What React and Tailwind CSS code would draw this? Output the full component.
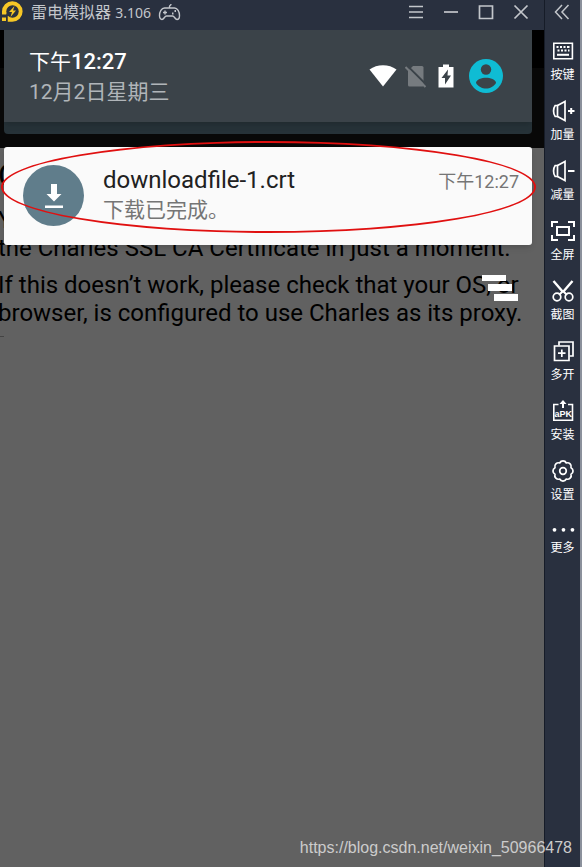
const KeyboardIcon = () => (
  <svg viewBox="0 0 24 24" className="h-6 w-6" fill="none" stroke="currentColor" strokeWidth="1.6">
    <path d="M2.8 4.3h18.6v15.4H2.8z" />
    <path d="M5.500 8h2M9 8h2M12.500 8h2M16 8h2.500M6.500 11.500h2M10 11.500h2M13.500 11.500h2M17 11.500h1.500" strokeWidth="2" />
    <path d="M6 15.800h12" strokeWidth="2" />
  </svg>
);

const VolumeIcon = ({ up }) => (
  <svg viewBox="0 0 24 24" className="h-6 w-6" fill="none" stroke="currentColor" strokeWidth="1.7">
    <path d="M6.500 6.500H4.200C2 9.500 2 14.500 4.200 17.500h2.300z" />
    <path d="M6.500 6.500 14 2.500v19L6.500 17.500" />
    <path d={up ? "M17 12h6.500M20.200 9v6" : "M17 12h6.500"} strokeWidth="2" />
  </svg>
);

const FullscreenIcon = () => (
  <svg viewBox="0 0 24 24" className="h-6 w-6" fill="none" stroke="currentColor" strokeWidth="2">
    <path d="M1 8V3h6M17 3h6v5M23 16v5h-6M7 21H1v-5" />
    <path d="M6 8h12v8H6z" />
  </svg>
);

const ScissorsIcon = () => (
  <svg viewBox="0 0 24 24" className="h-6 w-6" fill="none" stroke="currentColor">
    <path d="M2.500 2 12 13M21.500 2 12 13" strokeWidth="2.400" />
    <path d="m12 12-4 4M12 12l4 4" strokeWidth="2" />
    <circle cx="6" cy="18" r="3.800" strokeWidth="1.700" />
    <circle cx="18" cy="18" r="3.800" strokeWidth="1.700" />
  </svg>
);

const MultiIcon = () => (
  <svg viewBox="0 0 24 24" className="h-6 w-6" fill="none" stroke="currentColor" strokeWidth="1.700">
    <path d="M8 6.500V3h14v14h-3.500" />
    <path d="M3.500 7h14.500v14.500H3.500zM10.800 10.500v7.500M7 14.200h7.500" />
  </svg>
);

const ApkIcon = () => (
  <svg viewBox="0 0 24 24" className="h-6 w-6" fill="none" stroke="currentColor" strokeWidth="1.600">
    <path d="M7.500 5.500H2.800v15.700h18.700V5.500h-4.500" />
    <path d="M12 9V4" strokeWidth="2" />
    <path d="m8.500 5 3.500-4 3.500 4z" fill="currentColor" stroke="none" />
    <text x="12.200" y="18" textAnchor="middle" fontSize="9" fontWeight="700" fontFamily="Liberation Sans, sans-serif" fill="currentColor" stroke="none">
      aPK
    </text>
  </svg>
);

const GearIcon = () => (
  <svg viewBox="0 0 24 24" className="h-6 w-6" fill="none" stroke="currentColor" strokeWidth="1.700" strokeLinejoin="round">
    <path d="M8.700 4A3.700 3.700 0 0 1 15.300 4A3.700 3.700 0 0 1 20 8.700A3.700 3.700 0 0 1 20 15.300A3.700 3.700 0 0 1 15.300 20A3.700 3.700 0 0 1 8.700 20A3.700 3.700 0 0 1 4 15.300A3.700 3.700 0 0 1 4 8.700A3.700 3.700 0 0 1 8.700 4z" />
    <circle cx="12" cy="12" r="3.300" />
  </svg>
);

const MoreIcon = () => (
  <svg viewBox="0 0 24 18" className="h-[17px] w-6" fill="currentColor">
    <circle cx="3" cy="11.500" r="2" />
    <circle cx="12.500" cy="11.500" r="2" />
    <circle cx="22" cy="11.500" r="2" />
  </svg>
);

const tools = [
  { label: "按键", icon: <KeyboardIcon /> },
  { label: "加量", icon: <VolumeIcon up /> },
  { label: "减量", icon: <VolumeIcon /> },
  { label: "全屏", icon: <FullscreenIcon /> },
  { label: "截图", icon: <ScissorsIcon /> },
  { label: "多开", icon: <MultiIcon /> },
  { label: "安装", icon: <ApkIcon /> },
  { label: "设置", icon: <GearIcon /> },
  { label: "更多", icon: <MoreIcon /> },
];

const windowButtons = [
  { label: "Menu", d: "M2 3.500h14M2 9h14M2 14.500h14" },
  { label: "Minimize", d: "M2 9h14" },
  { label: "Maximize", d: "M2.500 3h13v12.500h-13z" },
  { label: "Close", d: "m2.500 2.500 13 13M15.500 2.500l-13 13" },
];

function TitleBar() {
  return (
    <header className="flex h-[30px] items-center bg-[#29303f] pr-[14px] pb-[6px] text-[#c3c6cb]">
      <svg viewBox="0 0 24 24" className="h-6 w-6 shrink-0">
        <path d="M2 11.500a10.300 10.300 0 1 1 10.300 10.300H7V16H2z" fill="#f6c626" />
        <path d="M2 17.500h4V21H2z" fill="#f6c626" />
        <circle cx="12.500" cy="11.500" r="6.200" fill="#29303f" />
        <path d="M2 15.300h9M7 13.500v8.500" stroke="#29303f" strokeWidth="1.500" />
        <path d="m14.500 6-5.500 6h3l-1.500 5 5.500-6.500h-3z" fill="#f6c626" />
      </svg>
      <h1 className="ml-[7px] font-['Noto_Sans','Noto_Sans_CJK_SC',sans-serif] text-[16px] leading-6 whitespace-nowrap">
        雷电模拟器 <span className="text-[14px]">3.106</span>
      </h1>
      <svg viewBox="0 0 24 18" className="ml-[7px] h-[18px] w-6" fill="none" stroke="currentColor" strokeWidth="1.400">
        <path d="M11.500 5V3.500c0-1.500 1.500-.500 1.500-2.500" />
        <path d="M6.500 5h10c3 0 5 4 5 7.500 0 2.500-1 4-2.500 4-2 0-2.500-3.500-4.500-3.500h-6c-2 0-2.500 3.500-4.500 3.500-1.500 0-2.500-1.500-2.500-4C1.500 9 3.500 5 6.500 5z" />
        <path d="M7 7.500v4M5 9.500h4" />
        <path d="M14 10.500h1.500M16.500 8H18" strokeWidth="2" />
      </svg>
      <div className="ml-auto flex items-center gap-[17px]">
        {windowButtons.map((b) => (
          <button key={b.label} aria-label={b.label}>
            <svg viewBox="0 0 18 18" className="h-[18px] w-[18px]" fill="none" stroke="currentColor" strokeWidth="1.700">
              <path d={b.d} />
            </svg>
          </button>
        ))}
      </div>
    </header>
  );
}

function StatusPanel() {
  return (
    <section className="overflow-hidden rounded-b-sm bg-[#263238] pb-3">
      <div className="flex h-[92px] items-center bg-[#3b4349] pr-[29px] pl-[25px] shadow-md">
        <div className="flex-1 pt-[2px] whitespace-nowrap">
          <p className="text-[22px] leading-[30px] font-medium text-white">
            <span className="text-[21px] font-normal">下午</span>12:27
          </p>
          <p className="text-[21px] leading-[30px] text-[#b0b5b9]">12月2日星期三</p>
        </div>
        <svg viewBox="0 0 28 24" className="h-6 w-7" fill="#fff">
          <path d="M.500 5.500C8-.300 20-.300 27.500 5.500L14 22.500z" />
        </svg>
        <svg viewBox="0 0 22 24" className="ml-2 h-6 w-[22px]">
          <path d="m8 2-5 5v14q0 1.500 1.500 1.500h13q1 0 1-1V3.500Q18.500 2 17 2z" fill="#767b7f" />
          <path d="M2.500 2 22 21.500" stroke="#3b4349" strokeWidth="2" />
          <path d="m.500 3 20 20" stroke="#767b7f" strokeWidth="2" />
        </svg>
        <svg viewBox="0 0 16 24" className="ml-[11px] h-6 w-4">
          <path d="M5 .500h6V3h4.500v20.500H.500V3H5z" fill="#fff" />
          <path d="M10 5.500 3.500 14H7v6.500l6-9H9.500z" fill="#3b4349" />
        </svg>
        <svg viewBox="0 0 34 34" className="ml-[15px] h-[34px] w-[34px]">
          <circle cx="17" cy="17" r="17" fill="#0fbcd4" />
          <circle cx="17" cy="10.500" r="5.200" fill="#3b4349" />
          <path d="M7 24c0-3.500 6-5.200 10-5.200S27 20.500 27 24c-2 3.500-6 5.500-10 5.500S9 27.500 7 24z" fill="#3b4349" />
        </svg>
      </div>
    </section>
  );
}

function Notification() {
  return (
    <article className="relative mt-[13px] flex h-[98px] rounded-[3px] bg-[#fafafa] pt-[18px] pr-[13px] pl-[19px] shadow-md">
      <svg viewBox="0 0 61 61" className="h-[61px] w-[61px] shrink-0">
        <circle cx="30.500" cy="30.500" r="30.500" fill="#607d8b" />
        <path d="M28 19h6v10h4.500L31 36.500 23.500 29H28zM22 40.500h18V43H22z" fill="#fff" />
      </svg>
      <div className="ml-[19px] flex-1 whitespace-nowrap">
        <h2 className="text-[24px] leading-[30px] text-[#212121]">downloadfile-1.crt</h2>
        <p className="text-[21px] leading-[30px] text-[#757575]">下载已完成。</p>
      </div>
      <time className="text-[18px] leading-[34px] whitespace-nowrap text-[#757575]">下午12:27</time>
      <div className="absolute -top-[6px] -right-1 -left-[3px] h-[92px] rounded-[50%] border-[2px] border-[#e01010]" />
    </article>
  );
}

function Screen() {
  return (
    <main className="relative flex-1 overflow-hidden bg-[#616161] font-['Roboto','Noto_Sans_CJK_SC',sans-serif]">
      <div className="h-[118px] border-t-[38px] border-black bg-[#080808]" />
      <div className="-ml-[2px] pt-[9px] text-[24px] leading-7 whitespace-nowrap text-black">
        <h2 className="mb-[13px] text-[32px] leading-9">Charles</h2>
        <p className="mb-[9px]">
          Your browser should download and install
          <br />
          the Charles SSL CA Certificate in just a moment.
        </p>
        <p>
          If this doesn’t work, please check that your OS, or
          <br />
          browser, is configured to use Charles as its proxy.
        </p>
        <hr className="mt-[9px] w-[6px] border-[#444]" />
      </div>

      <div className="absolute inset-x-0 top-0 pr-3 pl-1">
        <StatusPanel />
        <Notification />
        <button aria-label="清除全部" className="mt-[30px] mr-[14px] ml-auto block">
          <svg viewBox="0 0 36 26" className="h-[26px] w-9" fill="#fff">
            <path d="M0 0h24v6H0zM6 9h24v7H6zM12 19h24v7H12z" />
          </svg>
        </button>
      </div>
    </main>
  );
}

function Toolbar() {
  return (
    <aside className="w-[38px] shrink-0 border-r-2 border-l border-r-[#8b919c] border-l-[#161c28] bg-[#29303f] font-['Noto_Sans_CJK_SC',sans-serif] text-white">
      <button aria-label="收起" className="mx-auto flex h-[39px] items-start pt-[3px] text-[#c3c6cb]">
        <svg viewBox="0 0 18 18" className="h-[18px] w-[18px]" fill="none" stroke="currentColor" strokeWidth="1.500">
          <path d="M8 2 1.500 9 8 16M14.500 2 8 9l6.500 7" />
        </svg>
      </button>
      <nav className="flex flex-col gap-[17px]">
        {tools.map((t) => (
          <button key={t.label} className="flex flex-col items-center gap-[3px] text-[12px] leading-4 whitespace-nowrap">
            {t.icon}
            {t.label}
          </button>
        ))}
      </nav>
    </aside>
  );
}

export default function App() {
  return (
    <div className="relative flex min-h-screen overflow-hidden">
      <div className="flex min-w-0 flex-1 flex-col">
        <TitleBar />
        <Screen />
      </div>
      <Toolbar />
      <p className="absolute right-[10px] bottom-[9px] font-['Liberation_Sans',sans-serif] text-[16px] leading-5 text-[#cccccc]">
        https://blog.csdn.net/weixin_50966478
      </p>
    </div>
  );
}
